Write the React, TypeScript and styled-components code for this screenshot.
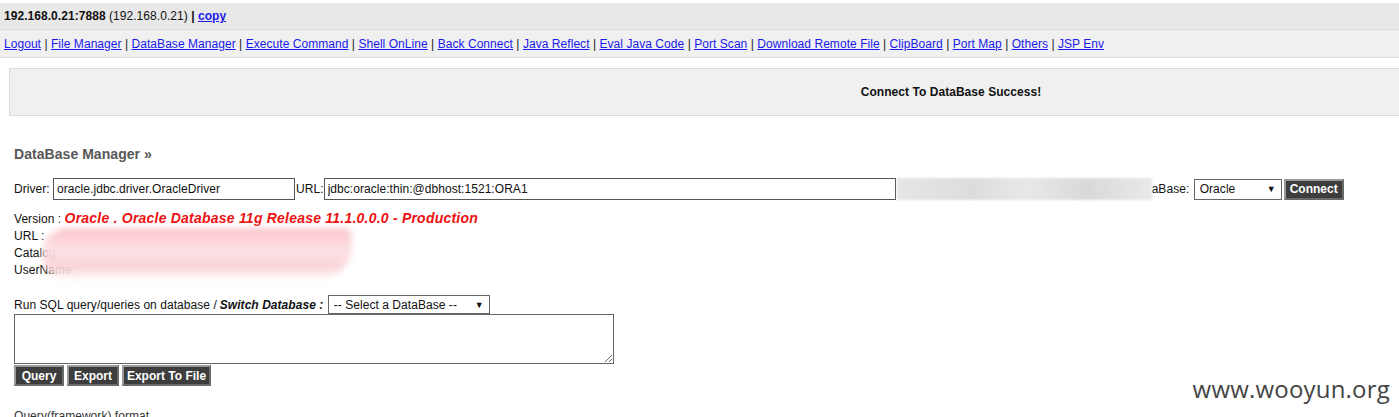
import React from "react";
import styled, { createGlobalStyle } from "styled-components";

const Global = createGlobalStyle`
  html, body { margin: 0; padding: 0; background: #fff; overflow: hidden; }
  body { font-family: "Liberation Sans", Arial, sans-serif; font-size: 12px; color: #111; letter-spacing: 0.05px; }
`;

const Page = styled.div`
  position: relative;
  width: 1399px;
  height: 417px;
  overflow: hidden;
  padding-top: 3px;
  box-sizing: border-box;
`;

const TopBar = styled.div`
  height: 26px;
  background: #e8e8e8;
  border-bottom: 1px solid #dcdcdc;
  display: flex;
  align-items: center;
  padding-left: 4px;
  font-weight: bold;
  white-space: pre;
`;

const Plain = styled.span`
  font-weight: normal;
`;

const Link = styled.a`
  color: #1a1aee;
  text-decoration: underline;
  cursor: pointer;
`;

const NavBar = styled.div`
  height: 27px;
  background: #f0f0f0;
  border-bottom: 1px solid #dcdcdc;
  display: flex;
  align-items: center;
  padding-left: 4px;
  white-space: pre;
`;

const Sep = styled.span`
  color: #222;
`;

const Main = styled.div`
  padding: 10px 0 0 9px;
`;

const MessageBox = styled.div`
  width: 1882px;
  height: 46px;
  border: 1px solid #dcdcdc;
  background: #f0f0f0;
  display: flex;
  align-items: center;
  justify-content: center;
  font-weight: bold;
`;

const Section = styled.div`
  padding-left: 5px;
  position: relative;
`;

const Title = styled.h2`
  margin: 29px 0 0;
  font-size: 14px;
  font-weight: bold;
  color: #585858;
  line-height: 18px;
`;

const FormRow = styled.div`
  margin-top: 15px;
  display: flex;
  align-items: center;
  white-space: nowrap;
  height: 22px;
`;

const Input = styled.input<{ $w: number }>`
  width: ${(p) => p.$w}px;
  height: 22px;
  box-sizing: border-box;
  border: 1px solid #555;
  padding: 0 3px;
  font-family: "Liberation Sans", Arial, sans-serif;
  font-size: 12px;
  letter-spacing: 0.05px;
  color: #111;
  margin: 0 1px 0 0;
  outline: none;
`;

const Redacted = styled.div<{ $w: number }>`
  width: ${(p) => p.$w}px;
  height: 22px;
  background: linear-gradient(90deg, #e2dfe0, #d6d3d4 30%, #e4e2e3 50%, #d2d0d1 75%, #e6e4e5);
  filter: blur(1px);
  opacity: 0.8;
`;

const SelectBox = styled.div<{ $w: number; $h: number }>`
  width: ${(p) => p.$w}px;
  height: ${(p) => p.$h}px;
  box-sizing: border-box;
  border: 1px solid #666;
  background: #fff;
  display: flex;
  align-items: center;
  justify-content: space-between;
  padding: 0 5px 0 5px;
  font-size: 12px;
  margin: 0 2px 0 1px;
`;

const Arrow = styled.span`
  font-size: 9px;
`;

const DarkButton = styled.button<{ $w: number }>`
  width: ${(p) => p.$w}px;
  height: 21px;
  background: #3d3d3d;
  color: #fff;
  font-family: "Liberation Sans", Arial, sans-serif;
  font-weight: bold;
  font-size: 12px;
  border: 2px solid #8a8a8a;
  border-color: #9a9a9a #6a6a6a #6a6a6a #9a9a9a;
  padding: 0;
  cursor: pointer;
`;

const Info = styled.div`
  margin-top: 10px;
  line-height: 17px;
  position: relative;
`;

const Version = styled.span`
  color: #ee1111;
  font-weight: bold;
  font-style: italic;
  font-size: 14px;
  letter-spacing: 0.22px;
`;

const Smear = styled.div`
  position: absolute;
  left: 28px;
  top: 18px;
  width: 310px;
  height: 52px;
  border-radius: 30px 10px 40px 30px;
  background: linear-gradient(180deg, rgba(250,190,195,0.9) 0%, rgba(252,225,228,0.95) 45%, rgba(250,205,210,0.9) 75%, rgba(255,255,255,0.9) 100%);
  filter: blur(3px);
`;

const SqlLine = styled.div`
  margin-top: 16px;
  display: flex;
  align-items: center;
  white-space: nowrap;
  height: 19px;
`;

const BoldItalic = styled.b`
  font-style: italic;
  margin-left: 3px;
`;

const TextArea = styled.textarea`
  display: block;
  width: 600px;
  height: 50px;
  box-sizing: border-box;
  border: 1px solid #666;
  margin: 0;
  resize: both;
  font-family: "Liberation Mono", monospace;
`;

const ButtonRow = styled.div`
  margin-top: 1px;
  display: flex;
  gap: 3px;
`;

const Footer = styled.div`
  margin-top: 23px;
  color: #333;
`;

const SqlSmear = styled.div`
  position: absolute;
  left: -14px;
  top: 322px;
  width: 165px;
  height: 14px;
  background: linear-gradient(90deg, #d8d8d8, #e8e8e8 40%, #dadada 70%, #eeeeee);
  filter: blur(1px);
`;

const Watermark = styled.div`
  position: absolute;
  right: 9px;
  top: 372px;
  font-family: "Open Sans", "DejaVu Sans", sans-serif;
  font-size: 24px;
  color: #444;
  letter-spacing: 0.2px;
`;

const navItems = [
  "Logout",
  "File Manager",
  "DataBase Manager",
  "Execute Command",
  "Shell OnLine",
  "Back Connect",
  "Java Reflect",
  "Eval Java Code",
  "Port Scan",
  "Download Remote File",
  "ClipBoard",
  "Port Map",
  "Others",
  "JSP Env",
];

export default function App() {
  return (
    <Page>
      <Global />
      <TopBar>
        192.168.0.21:7888 <Plain>(192.168.0.21)</Plain> | <Link>copy</Link>
      </TopBar>
      <NavBar>
        {navItems.map((n, i) => (
          <React.Fragment key={n}>
            {i > 0 && <Sep> | </Sep>}
            <Link>{n}</Link>
          </React.Fragment>
        ))}
      </NavBar>
      <Main>
        <MessageBox>Connect To DataBase Success!</MessageBox>
        <Section>
          <Title>DataBase Manager »</Title>
          <FormRow>
            Driver:&nbsp;
            <Input $w={242} defaultValue="oracle.jdbc.driver.OracleDriver" />
            URL:
            <Input $w={572} defaultValue="jdbc:oracle:thin:@dbhost:1521:ORA1" />
            <Redacted $w={255} />
            aBase:&nbsp;
            <SelectBox $w={88} $h={21}>
              Oracle <Arrow>▼</Arrow>
            </SelectBox>
            <DarkButton $w={60}>Connect</DarkButton>
          </FormRow>
          <Info>
            Version : <Version>Oracle . Oracle Database 11g Release 11.1.0.0.0 - Production</Version>
            <br />
            URL :
            <br />
            Catalog :
            <br />
            UserName :
            <Smear />
          </Info>
          <SqlLine>
            Run SQL query/queries on database /<BoldItalic>Switch Database :</BoldItalic>&nbsp;
            <SelectBox $w={162} $h={19}>
              -- Select a DataBase -- <Arrow>▼</Arrow>
            </SelectBox>
          </SqlLine>
          <TextArea />
          <ButtonRow>
            <DarkButton $w={50}>Query</DarkButton>
            <DarkButton $w={52}>Export</DarkButton>
            <DarkButton $w={89}>Export To File</DarkButton>
          </ButtonRow>
          <Footer>Query(framework) format</Footer>
          <SqlSmear />
        </Section>
      </Main>
      <Watermark>www.wooyun.org</Watermark>
    </Page>
  );
}
